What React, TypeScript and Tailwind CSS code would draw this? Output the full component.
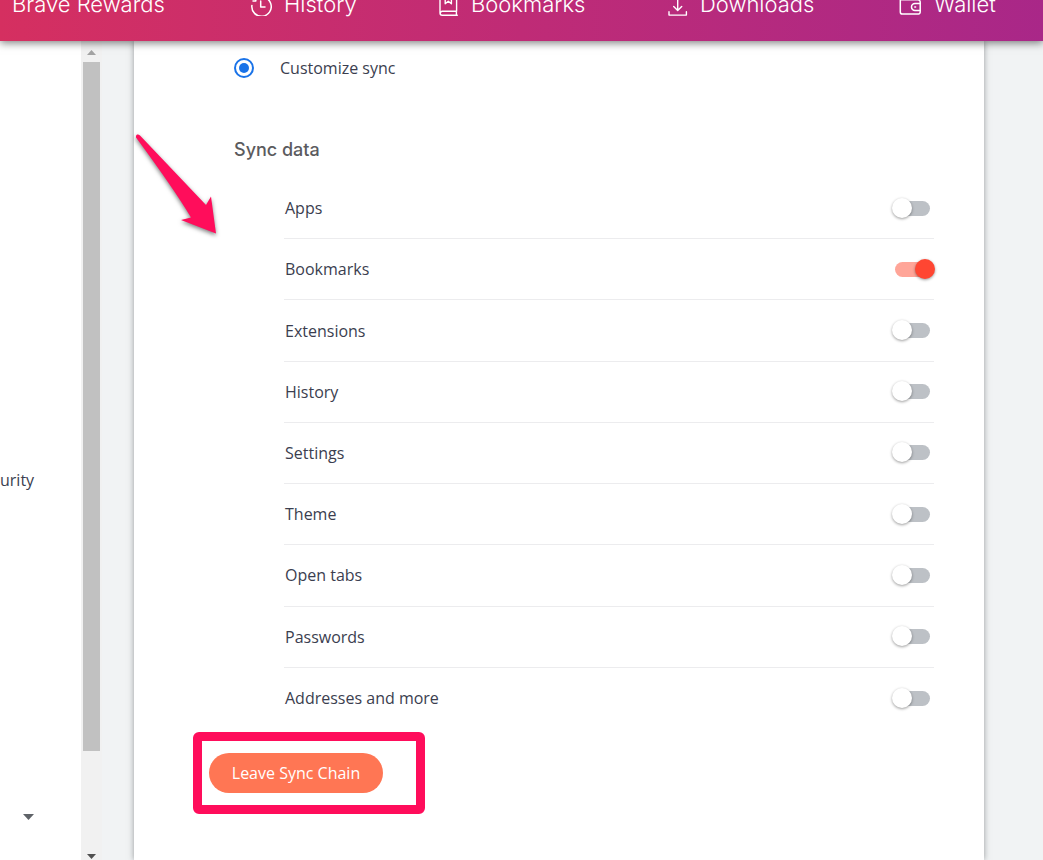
import React from "react";

interface SyncItem {
    id: string;
    label: string;
    enabled: boolean;
}

const syncItems: SyncItem[] = [
    { id: "apps", label: "Apps", enabled: false },
    { id: "bookmarks", label: "Bookmarks", enabled: true },
    { id: "extensions", label: "Extensions", enabled: false },
    { id: "history", label: "History", enabled: false },
    { id: "settings", label: "Settings", enabled: false },
    { id: "theme", label: "Theme", enabled: false },
    { id: "tabs", label: "Open tabs", enabled: false },
    { id: "passwords", label: "Passwords", enabled: false },
    { id: "addresses", label: "Addresses and more", enabled: false },
];

const RewardsIcon = () => (
    <svg className="w-5 h-6 shrink-0" viewBox="0 0 20 24" fill="none" stroke="currentColor" strokeWidth="1.6" strokeLinejoin="round">
        <path d="M10 3L20 20.5H0Z M10 3V13 M10 13L20 20.5 M10 13L0 20.5" />
    </svg>
)

const HistoryIcon = () => (
    <svg className="w-[21px] h-6 shrink-0" viewBox="0 0 21 24" fill="none" stroke="currentColor" strokeWidth="1.5" strokeLinecap="round" strokeLinejoin="round">
        <path d="M0.9 13.4A9.7 9.7 0 1 0 5.5 6.3" />
        <path d="M2 8.9H4.8V6 M9.7 9V15H14" />
    </svg>
)

const BookmarksIcon = () => (
    <svg className="w-5 h-6 shrink-0" viewBox="0 0 20 24" fill="none" stroke="currentColor" strokeWidth="1.4" strokeLinecap="round" strokeLinejoin="round">
        <path d="M18.3 23.3H3.2A2.2 2.2 0 0 1 1 21.1V4.5A2.4 2.4 0 0 1 3.4 2.1H17.6V19.3H3.2A2 2 0 0 0 3.2 23.3 M17.4 19.3V23.3" />
        <path d="M6.2 2.4V11.8L9.3 9.2L12.4 11.8V2.4" />
    </svg>
)

const DownloadsIcon = () => (
    <svg className="w-5 h-6 shrink-0" viewBox="0 0 20 24" fill="none" stroke="currentColor" strokeWidth="1.4" strokeLinecap="round" strokeLinejoin="round">
        <path d="M1 19.8V23.1H18.4V19.8 M9.7 3V18.4 M5.7 14.6L9.7 18.6L13.7 14.6" />
    </svg>
)

const WalletIcon = () => (
    <svg className="w-[23px] h-6 shrink-0" viewBox="0 0 23 24" fill="none" stroke="currentColor" strokeWidth="1.5" strokeLinecap="round" strokeLinejoin="round">
        <path d="M1.3 7.7V19.9A2.2 2.2 0 0 0 3.5 22.1H19A2.2 2.2 0 0 0 21.2 19.9V10A2.2 2.2 0 0 0 19 7.8H3A1.8 1.8 0 0 1 3 4.2H18V7.8" />
        <path d="M21.2 18.6H16A3.5 3.5 0 0 1 16 11.6H21.2 M15.8 15.1H16.6" />
    </svg>
)

const navItems = [
    { label: "Brave Rewards", icon: <RewardsIcon /> },
    { label: "History", icon: <HistoryIcon /> },
    { label: "Bookmarks", icon: <BookmarksIcon /> },
    { label: "Downloads", icon: <DownloadsIcon /> },
    { label: "Wallet", icon: <WalletIcon /> },
];

const TopBar = () => (
    <header className="relative z-10 h-[41px] shrink-0 bg-gradient-to-r from-[#d52f60] via-[#bf2b76] to-[#a92788] shadow-[0_2px_8px_rgba(0,0,0,0.5)]">
        <div className="h-full overflow-hidden flex items-end pb-[21px]">
            <nav className="-ml-5 grow grid grid-cols-[271px_188px_229px_231px_1fr] text-white font-[Inter,sans-serif] font-light text-[22px] leading-8">
                {navItems.map((item) => (
                    <a key={item.label} href="#" className="flex items-center gap-3 whitespace-nowrap">
                        {item.icon}
                        {item.label}
                    </a>
                ))}
            </nav>
        </div>
    </header>
)

const Sidebar = () => (
    <aside className="w-[81px] shrink-0 overflow-hidden bg-white flex flex-col items-start pt-[427px]">
        <a href="#" className="text-base leading-6">urity</a>
        <button type="button" aria-label="Advanced" className="mt-[313px] ml-[23px] h-6 flex items-center">
            <svg className="w-[11px] h-[6px]" viewBox="0 0 11 6"><path d="M0 0H11L5.5 6Z" fill="#5f6368" /></svg>
        </button>
    </aside>
)

const Scrollbar = () => (
    <div className="w-[21px] shrink-0 bg-[#f1f1f1] flex flex-col pl-[2px] pr-[2px]">
        <div className="h-[21px] pt-[2px] flex items-center justify-center">
            <svg className="w-[9px] h-[5px]" viewBox="0 0 9 5"><path d="M4.5 0L9 5H0Z" fill="#a3a3a3" /></svg>
        </div>
        <div className="grow flex flex-col">
            <div className="grow-[874] bg-[#c1c1c1]"></div>
            <div className="grow-[126]"></div>
        </div>
        <div className="h-[10px] pt-[2px] flex items-center justify-center">
            <svg className="w-[9px] h-[5px]" viewBox="0 0 9 5"><path d="M0 0H9L4.5 5Z" fill="#505050" /></svg>
        </div>
    </div>
)

const SyncRow: React.FC<{ item: SyncItem }> = ({ item }) => (
    <div className="flex items-center justify-between pl-px pr-1 border-b border-[#ececee] last:border-b-0">
        <label htmlFor={item.id}>{item.label}</label>
        <input
            id={item.id}
            type="checkbox"
            defaultChecked={item.enabled}
            className="relative appearance-none w-[35px] h-[15px] rounded-full bg-[#bdc1c6] checked:bg-[#ffa598] before:absolute before:-top-[3px] before:-left-[3px] before:size-5 before:rounded-full before:bg-white before:shadow-[0_1px_3px_rgba(0,0,0,0.4)] checked:before:left-5 checked:before:bg-[#ff4632]"
        />
    </div>
)

// Marker pointing at the list of synced data
const Arrow = () => (
    <svg className="absolute left-0 top-[88px] w-[90px] h-[112px] drop-shadow-[0_2px_2px_rgba(0,0,0,0.5)]" viewBox="0 0 90 112">
        <path d="M3 5.5Q4.5 5 6 6.5L72 76L77 67.5L82 104.5L47 91L57 88.5Q40 60 2 8.5Q1.5 6.5 3 5.5Z" fill="#ff0d5b" />
    </svg>
)

export default function App() {
    return (
        <div className="min-h-screen flex flex-col bg-[#f1f3f4] text-[#3b3e4f] font-['Open_Sans',sans-serif]">
            <TopBar />
            <div className="grow flex">
                <Sidebar />
                <Scrollbar />
                <main className="relative grow ml-8 mr-[59px] pt-[11px] pb-11 bg-white shadow-[0_0_6px_rgba(60,64,67,0.5)]">
                    <Arrow />
                    <div className="h-8 ml-[100px] flex items-center">
                        <input
                            id="customize"
                            type="radio"
                            name="sync"
                            defaultChecked
                            className="appearance-none size-5 rounded-full border-2 border-[#1a73e8] p-[3px] checked:bg-[#1a73e8] bg-clip-content"
                        />
                        <label htmlFor="customize" className="ml-[26px]">Customize sync</label>
                    </div>
                    <h2 className="mt-[54px] ml-[100px] font-[Inter,sans-serif] font-medium text-lg leading-6 text-[#5b5b5e]">Sync data</h2>
                    <div className="mt-4 ml-[150px] mr-[50px] min-h-[551px] grid auto-rows-fr">
                        {syncItems.map((item) => (
                            <SyncRow key={item.id} item={item} />
                        ))}
                    </div>
                    <div className="mt-[3px] ml-[59px] w-[232px] rounded-md border-[9px] border-[#ff0d5b] py-3 pl-[7px]">
                        <button type="button" className="h-10 w-[174px] rounded-full bg-[#ff7654] text-white whitespace-nowrap">Leave Sync Chain</button>
                    </div>
                </main>
            </div>
        </div>
    )
}
